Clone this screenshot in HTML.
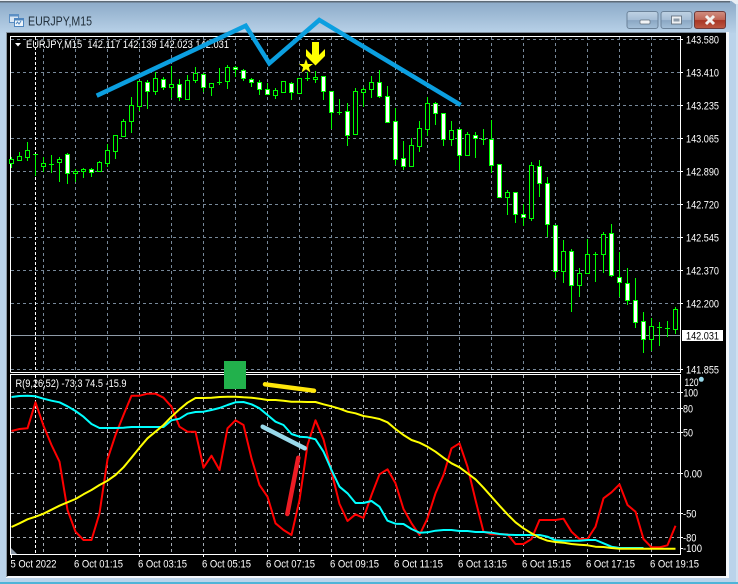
<!DOCTYPE html>
<html><head><meta charset="utf-8"><title>EURJPY,M15</title>
<style>
html,body{margin:0;padding:0;background:#b9d3ea;width:738px;height:584px;overflow:hidden}
svg{display:block;position:absolute;left:0;top:0}
text{font-family:"Liberation Sans",sans-serif;font-size:11px;fill:#fff}
</style></head><body>
<svg width="738" height="584" viewBox="0 0 738 584" xmlns="http://www.w3.org/2000/svg">
<defs>
<linearGradient id="tb" x1="0" y1="0" x2="0" y2="1"><stop offset="0" stop-color="#8aa8c6"/><stop offset="0.12" stop-color="#8fadca"/><stop offset="1" stop-color="#b8d1e8"/></linearGradient>
<linearGradient id="btn" x1="0" y1="0" x2="0" y2="1"><stop offset="0" stop-color="#bfd2e4"/><stop offset="0.5" stop-color="#a5bdd5"/><stop offset="0.52" stop-color="#8aa7c3"/><stop offset="1" stop-color="#a5c0d9"/></linearGradient>
<linearGradient id="cls" x1="0" y1="0" x2="0" y2="1"><stop offset="0" stop-color="#d08f82"/><stop offset="0.48" stop-color="#c06656"/><stop offset="0.52" stop-color="#a83624"/><stop offset="1" stop-color="#bd5842"/></linearGradient>
</defs>
<rect width="738" height="584" fill="#bad3ea"/>
<rect x="0" y="0" width="738" height="33" fill="url(#tb)"/>
<rect x="0" y="0" width="738" height="1" fill="#e8eef4"/>
<rect x="0" y="1" width="730" height="1.5" fill="#5d6a76"/>
<path d="M730 0L738 6V0z" fill="#e8eef4"/>
<rect x="736" y="4" width="2" height="578" fill="#cfe0ef"/>
<rect x="0" y="582" width="738" height="2" fill="#4fb4d8"/>
<rect x="6" y="32" width="723" height="546" fill="#f4f7fa"/>
<rect x="6" y="32" width="720" height="1.5" fill="#7b8a99"/>
<rect x="6" y="32" width="1.5" height="545" fill="#8a97a3"/>
<rect x="7" y="33" width="719" height="543" fill="#000"/>
<g shape-rendering="crispEdges">
<rect x="9.5" y="14.5" width="9" height="8" fill="#d8e6f4" stroke="#5c8fc4"/>
<rect x="9.5" y="14.5" width="9" height="2" fill="#5c8fc4"/>
<rect x="14.5" y="18.5" width="9" height="8" fill="#eef5fb" stroke="#4f86bf"/>
<rect x="14.5" y="18.5" width="9" height="2" fill="#4f86bf"/>
</g>
<path d="M16 24l1.500-2 1.500 2 2-3" fill="none" stroke="#4f86bf" stroke-width="1"/>
<text x="28" y="25.500" textLength="64" lengthAdjust="spacingAndGlyphs" style="font-size:13px;fill:#22303c">EURJPY,M15</text>
<rect x="627" y="11.500" width="31" height="17" rx="2.500" fill="url(#btn)" stroke="#6b8299"/>
<rect x="640" y="20" width="10" height="4" rx="1" fill="#f2f4f6" stroke="#5e6c7a" stroke-width=".7"/>
<rect x="661" y="11.500" width="31" height="17" rx="2.500" fill="url(#btn)" stroke="#6b8299"/>
<rect x="671.500" y="16" width="10" height="8" fill="#eef1f4" stroke="#5a6875" stroke-width=".8"/>
<rect x="673.500" y="18.500" width="6" height="3" fill="#8c9aa8"/>
<rect x="694.500" y="11.500" width="31" height="17" rx="2.500" fill="url(#cls)" stroke="#6d3a3a"/>
<path d="M706 16l8 8M714 16l-8 8" stroke="#f4f2f0" stroke-width="3" fill="none"/>
<g shape-rendering="crispEdges" fill="none">
<path d="M10.500 372.500V36.500H680.500V372.500H10.500" stroke="#fff"/>
<path d="M10.500 374.500H680.500V554.500H10.500z" stroke="#fff"/>
<path stroke="#778899" stroke-dasharray="3 3" d="M11 39.500H680M11 72.500H680M11 105.500H680M11 138.500H680M11 171.500H680M11 204.500H680M11 237.500H680M11 270.500H680M11 303.500H680M11 369.500H680M43.500 37V372M75.500 37V372M107.500 37V372M139.500 37V372M171.500 37V372M203.500 37V372M235.500 37V372M267.500 37V372M299.500 37V372M331.500 37V372M363.500 37V372M395.500 37V372M427.500 37V372M459.500 37V372M491.500 37V372M523.500 37V372M555.500 37V372M587.500 37V372M619.500 37V372M651.500 37V372"/>
<path stroke="#8f9ba8" d="M11 335.500H680"/>
<path stroke="#a4abb3" stroke-dasharray="3 3" d="M11 392.500H680M11 408.500H680M11 432.500H680M11 473.500H680M11 513.500H680M11 537.500H680M43.500 375V554M75.500 375V554M107.500 375V554M139.500 375V554M171.500 375V554M203.500 375V554M235.500 375V554M267.500 375V554M299.500 375V554M331.500 375V554M363.500 375V554M395.500 375V554M427.500 375V554M459.500 375V554M491.500 375V554M523.500 375V554M555.500 375V554M587.500 375V554M619.500 375V554M651.500 375V554"/>
<path stroke="#fff" stroke-dasharray="3 2" d="M35.500 37V372M35.500 375V554"/>
<path stroke="#fff" d="M680 39.500h3M680 72.500h3M680 105.500h3M680 138.500h3M680 171.500h3M680 204.500h3M680 237.500h3M680 270.500h3M680 303.500h3M680 369.500h3M680 392.500h3M680 408.500h3M680 432.500h3M680 473.500h3M680 513.500h3M680 537.500h3M680 548.500h3M11.500 554v4M75.500 554v3M139.500 554v3M203.500 554v3M267.500 554v3M331.500 554v3M395.500 554v3M459.500 554v3M523.500 554v3M587.500 554v3M651.500 554v3"/>
<path stroke="#00ff00" d="M11.500 157V168M19.500 152V161M27.500 142V161M35.500 154V176M33 154.500h5M43.500 157V172M51.500 155V173M49 164.500h5M59.500 157V182M67.500 153V184M75.500 169V182M83.500 168V178M91.500 168V177M99.500 161V172M107.500 144V167M115.500 135V159M123.500 119V137M131.500 97V133M139.500 81V111M147.500 80V109M155.500 72V95M163.500 77V90M171.500 66V98M179.500 79V101M187.500 75V99M195.500 67V83M203.500 73V92M211.500 83V96M219.500 68V85M217 82.500h5M227.500 65V89M235.500 66V77M243.500 69V81M251.500 78V87M259.500 80V95M267.500 83V95M275.500 88V99M283.500 81V93M291.500 82V100M299.500 78V93M307.500 72V81M305 78.500h5M315.500 71V83M323.500 76V100M331.500 91V129M339.500 99V115M337 112.500h5M347.500 103V146M355.500 88V135M363.500 87V107M371.500 76V98M379.500 70V98M387.500 86V123M395.500 108V165M403.500 141V170M411.500 138V166M419.500 121V152M427.500 97V136M435.500 102V125M443.500 113V146M451.500 121V146M459.500 129V170M467.500 132V155M475.500 132V158M483.500 129V145M481 139.500h5M491.500 120V173M499.500 164V198M507.500 190V215M515.500 192V223M523.500 204V226M531.500 162V221M539.500 160V197M547.500 177V237M555.500 225V278M563.500 240V283M571.500 249V312M579.500 268V297M587.500 239V273M595.500 252V282M593 254.500h5M603.500 232V273M611.500 224V277M619.500 252V297M627.500 268V305M635.500 278V328M643.500 312V353M651.500 318V351M659.500 322V346M657 327.500h5M667.500 321V337M665 328.500h5M675.500 307V334"/>
<path stroke="#00ff00" fill="#000" d="M9.500 159.500h4v4h-4zM17.500 156.500h4v4h-4zM25.500 150.500h4v7h-4zM41.500 163.500h4v3h-4zM57.500 159.500h4v3h-4zM73.500 171.500h4v2h-4zM81.500 169.500h4v2h-4zM97.500 162.500h4v9h-4zM105.500 150.500h4v13h-4zM113.500 135.500h4v16h-4zM121.500 121.500h4v15h-4zM129.500 105.500h4v16h-4zM137.500 81.500h4v25h-4zM153.500 78.500h4v13h-4zM169.500 84.500h4v3h-4zM185.500 80.500h4v19h-4zM193.500 73.500h4v7h-4zM209.500 83.500h4v4h-4zM225.500 67.500h4v14h-4zM273.500 90.500h4v5h-4zM281.500 81.500h4v11h-4zM297.500 78.500h4v15h-4zM313.500 77.500h4v2h-4zM353.500 91.500h4v43h-4zM361.500 89.500h4v3h-4zM369.500 82.500h4v7h-4zM409.500 145.500h4v21h-4zM417.500 128.500h4v18h-4zM425.500 103.500h4v26h-4zM449.500 130.500h4v9h-4zM465.500 134.500h4v21h-4zM505.500 192.500h4v5h-4zM529.500 165.500h4v53h-4zM561.500 251.500h4v20h-4zM577.500 273.500h4v12h-4zM585.500 254.500h4v19h-4zM601.500 234.500h4v20h-4zM649.500 326.500h4v13h-4zM673.500 309.500h4v20h-4z"/>
<path stroke="#00ff00" fill="#fff" d="M65.500 154.500h4v19h-4zM89.500 169.500h4v3h-4zM145.500 82.500h4v9h-4zM161.500 79.500h4v8h-4zM177.500 84.500h4v13h-4zM201.500 74.500h4v13h-4zM233.500 67.500h4v2h-4zM241.500 70.500h4v8h-4zM249.500 79.500h4v3h-4zM257.500 82.500h4v7h-4zM265.500 89.500h4v5h-4zM289.500 83.500h4v9h-4zM321.500 76.500h4v15h-4zM329.500 91.500h4v21h-4zM345.500 111.500h4v24h-4zM377.500 82.500h4v14h-4zM385.500 96.500h4v26h-4zM393.500 121.500h4v38h-4zM401.500 158.500h4v8h-4zM433.500 103.500h4v10h-4zM441.500 113.500h4v26h-4zM457.500 129.500h4v26h-4zM473.500 135.500h4v3h-4zM489.500 139.500h4v26h-4zM497.500 164.500h4v33h-4zM513.500 192.500h4v22h-4zM521.500 214.500h4v3h-4zM537.500 166.500h4v17h-4zM545.500 183.500h4v41h-4zM553.500 225.500h4v46h-4zM569.500 251.500h4v34h-4zM609.500 233.500h4v42h-4zM617.500 277.500h4v5h-4zM625.500 283.500h4v17h-4zM633.500 300.500h4v22h-4zM641.500 321.500h4v18h-4z"/>
</g>
<path d="M11 548l6 6h-6z" fill="#8b97a5"/>
<path d="M15 43h6l-3 3.500z" fill="#fff"/>
<text x="26" y="48" textLength="203" lengthAdjust="spacingAndGlyphs" xml:space="preserve">EURJPY,M15  142.117 142.139 142.023 142.031</text>
<text x="15.500" y="387" textLength="111" lengthAdjust="spacingAndGlyphs">R(9,26,52) -73.3 74.5 -15.9</text>
<g>
<text x="686" y="43.500" textLength="33" lengthAdjust="spacingAndGlyphs">143.580</text>
<text x="686" y="76.500" textLength="33" lengthAdjust="spacingAndGlyphs">143.410</text>
<text x="686" y="109.500" textLength="33" lengthAdjust="spacingAndGlyphs">143.235</text>
<text x="686" y="142.500" textLength="33" lengthAdjust="spacingAndGlyphs">143.065</text>
<text x="686" y="175.500" textLength="33" lengthAdjust="spacingAndGlyphs">142.890</text>
<text x="686" y="208.500" textLength="33" lengthAdjust="spacingAndGlyphs">142.720</text>
<text x="686" y="241.500" textLength="33" lengthAdjust="spacingAndGlyphs">142.545</text>
<text x="686" y="274.500" textLength="33" lengthAdjust="spacingAndGlyphs">142.370</text>
<text x="686" y="307.500" textLength="33" lengthAdjust="spacingAndGlyphs">142.200</text>
<rect x="682" y="330" width="41" height="11" fill="#fff"/>
<text x="686" y="339.500" textLength="33" lengthAdjust="spacingAndGlyphs" style="fill:#000">142.031</text>
<text x="686" y="373.500" textLength="33" lengthAdjust="spacingAndGlyphs">141.855</text>
<text x="684.500" y="386" textLength="14" lengthAdjust="spacingAndGlyphs">120</text>
<text x="683.500" y="396.500" textLength="14.500" lengthAdjust="spacingAndGlyphs">100</text>
<text x="683" y="412.500" textLength="10" lengthAdjust="spacingAndGlyphs">80</text>
<text x="683" y="436.500" textLength="10" lengthAdjust="spacingAndGlyphs">50</text>
<text x="684" y="477.500" textLength="18" lengthAdjust="spacingAndGlyphs">0.00</text>
<text x="683" y="517.500" textLength="13.500" lengthAdjust="spacingAndGlyphs">-50</text>
<text x="683" y="541.500" textLength="13.500" lengthAdjust="spacingAndGlyphs">-80</text>
<text x="683" y="552" textLength="19" lengthAdjust="spacingAndGlyphs">-100</text>
<circle cx="701.300" cy="379.300" r="2.500" fill="#99d9ea"/>
</g>
<g>
<text x="10.500" y="567.500" textLength="46" lengthAdjust="spacingAndGlyphs">5 Oct 2022</text>
<text x="74" y="567.500" textLength="49" lengthAdjust="spacingAndGlyphs">6 Oct 01:15</text>
<text x="138" y="567.500" textLength="49" lengthAdjust="spacingAndGlyphs">6 Oct 03:15</text>
<text x="202" y="567.500" textLength="49" lengthAdjust="spacingAndGlyphs">6 Oct 05:15</text>
<text x="266" y="567.500" textLength="49" lengthAdjust="spacingAndGlyphs">6 Oct 07:15</text>
<text x="330" y="567.500" textLength="49" lengthAdjust="spacingAndGlyphs">6 Oct 09:15</text>
<text x="394" y="567.500" textLength="49" lengthAdjust="spacingAndGlyphs">6 Oct 11:15</text>
<text x="458" y="567.500" textLength="49" lengthAdjust="spacingAndGlyphs">6 Oct 13:15</text>
<text x="522" y="567.500" textLength="49" lengthAdjust="spacingAndGlyphs">6 Oct 15:15</text>
<text x="586" y="567.500" textLength="49" lengthAdjust="spacingAndGlyphs">6 Oct 17:15</text>
<text x="650" y="567.500" textLength="49" lengthAdjust="spacingAndGlyphs">6 Oct 19:15</text>
</g>
<g fill="none" stroke-width="2" stroke-linejoin="round">
<polyline stroke="#ff0000" points="11.500,431 19.500,429 27.500,428.300 35.500,402.300 43.500,425.700 51.500,445 59.500,461.700 67.500,510 75.500,531.700 83.500,540 91.500,540 99.500,513.300 107.500,459.300 115.500,435 123.500,415 131.500,395.700 139.500,395.700 147.500,393.700 155.500,393.700 163.500,397.700 171.500,406.700 179.500,426.700 187.500,431.700 195.500,431.700 203.500,467.700 211.500,455.700 219.500,470 227.500,428.300 235.500,420.300 243.500,425 251.500,458.300 259.500,485 267.500,496.700 275.500,523.300 283.500,530 291.500,535 299.500,500 307.500,445 315.500,420.300 323.500,439.300 331.500,471.700 339.500,504 347.500,521 355.500,514.300 363.500,518 371.500,495 379.500,474.300 387.500,469.300 395.500,483.300 403.500,509 411.500,523.300 419.500,535 427.500,518.300 435.500,493.300 443.500,475 451.500,448.300 459.500,443.300 467.500,466.700 475.500,500 483.500,531.700 491.500,534.300 499.500,534.300 507.500,534.300 515.500,544 523.500,544 531.500,539 539.500,520 547.500,520 555.500,520 563.500,518.700 571.500,531.700 579.500,539 587.500,539 595.500,526.700 603.500,498.300 611.500,492.300 619.500,484.300 627.500,505 635.500,511.700 643.500,539 651.500,547.300 659.500,547.300 667.500,545.300 675.500,525.700"/>
<polyline stroke="#00ffff" points="11.500,397 19.500,396 27.500,395.700 35.500,396.300 43.500,398.700 51.500,400.700 59.500,402.300 67.500,406.300 75.500,411 83.500,416.700 91.500,424 99.500,428 107.500,428 115.500,428 123.500,427.700 131.500,427 139.500,427 147.500,427 155.500,427 163.500,427 171.500,420.300 179.500,418.700 187.500,413.700 195.500,412 203.500,411.700 211.500,410 219.500,408 227.500,405 235.500,402.300 243.500,402 251.500,404.300 259.500,408.300 267.500,415 275.500,421.700 283.500,425 291.500,434 299.500,436.700 307.500,437.300 315.500,439.300 323.500,451.700 331.500,470 339.500,486.700 347.500,493.300 355.500,503 363.500,503 371.500,501 379.500,506.700 387.500,520.700 395.500,523.700 403.500,524 411.500,529 419.500,532.700 427.500,532.300 435.500,530.700 443.500,530 451.500,530 459.500,531 467.500,531 475.500,532 483.500,532 491.500,532.700 499.500,534 507.500,534.700 515.500,535 523.500,535 531.500,535 539.500,535 547.500,536.700 555.500,540.300 563.500,540.700 571.500,540.700 579.500,540.700 587.500,540 595.500,540 603.500,543.300 611.500,546.700 619.500,548 627.500,548 635.500,548 643.500,548"/>
<polyline stroke="#ffff00" points="11.500,527 19.500,523.300 27.500,519.300 35.500,516.700 43.500,513.700 51.500,509.700 59.500,505.700 67.500,502.300 75.500,499 83.500,494.300 91.500,490 99.500,485 107.500,480.700 115.500,475 123.500,467.300 131.500,457.700 139.500,447.700 147.500,438.300 155.500,431.700 163.500,425 171.500,416.700 179.500,409.300 187.500,402.700 195.500,398 203.500,398 211.500,397.700 219.500,397 227.500,396.700 235.500,396.700 243.500,397.300 251.500,397.700 259.500,398.700 267.500,400 275.500,400 283.500,400.700 291.500,401.700 299.500,401.700 307.500,402 315.500,402 323.500,404.300 331.500,406.300 339.500,408.700 347.500,411.700 355.500,413.300 363.500,416 371.500,417.300 379.500,419 387.500,422.300 395.500,429 403.500,435 411.500,440 419.500,442.700 427.500,446.700 435.500,451.700 443.500,457.700 451.500,463.300 459.500,467.300 467.500,473.300 475.500,479.300 483.500,487.700 491.500,496.700 499.500,505.700 507.500,514.300 515.500,522.300 523.500,528.300 531.500,533.300 539.500,537.700 547.500,540.700 555.500,542 563.500,542.700 571.500,544 579.500,544.700 587.500,545.300 595.500,546.700 603.500,547 611.500,548 619.500,548.700 627.500,548.700 635.500,548.700 643.500,548.700 651.500,548.700 659.500,548.700 667.500,548.700 675.500,548.700"/>
</g>
<polyline points="96.700,95.700 245.700,25.700 269.300,63.300 319.300,20 460.700,105" fill="none" stroke="#0b9fe0" stroke-width="4.500" stroke-linejoin="miter"/>
<path d="M312 42h7v13l6-6v7l-9.500 9.500-9.500-9.500v-7l6 6z" fill="#ffff00"/>
<polygon points="306,59 307.800,64 313,64 308.900,67.200 310.400,72.500 306,69.300 301.600,72.500 303.100,67.200 299,64 304.200,64" fill="#ffff00"/>
<rect x="224" y="361" width="22" height="28" fill="#22b14c"/>
<line x1="265" y1="384.300" x2="314" y2="390.700" stroke="#ffe60a" stroke-width="4.500" stroke-linecap="round"/>
<line x1="262.700" y1="426.700" x2="304.700" y2="448.300" stroke="#99d9ea" stroke-width="4.500" stroke-linecap="round"/>
<line x1="298.300" y1="457.700" x2="287.300" y2="514" stroke="#ed1c24" stroke-width="4.500" stroke-linecap="round"/>
</svg>
</body></html>
